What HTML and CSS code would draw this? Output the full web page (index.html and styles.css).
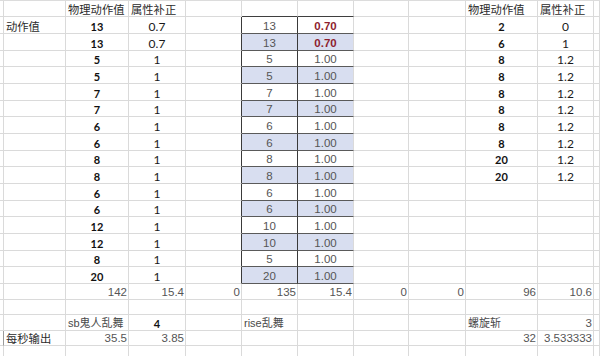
FILE: index.html
```html
<!DOCTYPE html>
<html lang="zh-CN">
<head>
<meta charset="utf-8">
<title>动作值</title>
<link rel="stylesheet" href="styles.css">
</head>
<body>
<div class="sheet">
  <div class="row h16">
    <div></div><div></div><div class="zh">物理动作值</div><div class="zh">属性补正</div><div></div><div class="tt"></div><div class="tt"></div><div></div><div></div><div class="zh">物理动作值</div><div class="zh">属性补正</div><div></div>
  </div>
  <div class="row h17">
    <div></div><div class="zh">动作值</div><div class="c bn">13</div><div class="c rn">0.7</div><div class="tl"></div><div class="c te">13</div><div class="c tf red">0.70</div><div></div><div></div><div class="c bn">2</div><div class="c rn">0</div><div></div>
  </div>
  <div class="row h17">
    <div></div><div></div><div class="c bn">13</div><div class="c rn">0.7</div><div class="tl"></div><div class="c te blue">13</div><div class="c tf blue red">0.70</div><div></div><div></div><div class="c bn">6</div><div class="c rn">1</div><div></div>
  </div>
  <div class="row h16">
    <div></div><div></div><div class="c bn">5</div><div class="c rn">1</div><div class="tl"></div><div class="c te">5</div><div class="c tf">1.00</div><div></div><div></div><div class="c bn">8</div><div class="c rn">1.2</div><div></div>
  </div>
  <div class="row h17">
    <div></div><div></div><div class="c bn">5</div><div class="c rn">1</div><div class="tl"></div><div class="c te blue">5</div><div class="c tf blue">1.00</div><div></div><div></div><div class="c bn">8</div><div class="c rn">1.2</div><div></div>
  </div>
  <div class="row h17">
    <div></div><div></div><div class="c bn">7</div><div class="c rn">1</div><div class="tl"></div><div class="c te">7</div><div class="c tf">1.00</div><div></div><div></div><div class="c bn">8</div><div class="c rn">1.2</div><div></div>
  </div>
  <div class="row h16">
    <div></div><div></div><div class="c bn">7</div><div class="c rn">1</div><div class="tl"></div><div class="c te blue">7</div><div class="c tf blue">1.00</div><div></div><div></div><div class="c bn">8</div><div class="c rn">1.2</div><div></div>
  </div>
  <div class="row h17">
    <div></div><div></div><div class="c bn">6</div><div class="c rn">1</div><div class="tl"></div><div class="c te">6</div><div class="c tf">1.00</div><div></div><div></div><div class="c bn">8</div><div class="c rn">1.2</div><div></div>
  </div>
  <div class="row h17">
    <div></div><div></div><div class="c bn">6</div><div class="c rn">1</div><div class="tl"></div><div class="c te blue">6</div><div class="c tf blue">1.00</div><div></div><div></div><div class="c bn">8</div><div class="c rn">1.2</div><div></div>
  </div>
  <div class="row h16">
    <div></div><div></div><div class="c bn">8</div><div class="c rn">1</div><div class="tl"></div><div class="c te">8</div><div class="c tf">1.00</div><div></div><div></div><div class="c bn">20</div><div class="c rn">1.2</div><div></div>
  </div>
  <div class="row h17">
    <div></div><div></div><div class="c bn">8</div><div class="c rn">1</div><div class="tl"></div><div class="c te blue">8</div><div class="c tf blue">1.00</div><div></div><div></div><div class="c bn">20</div><div class="c rn">1.2</div><div></div>
  </div>
  <div class="row h17">
    <div></div><div></div><div class="c bn">6</div><div class="c rn">1</div><div class="tl"></div><div class="c te">6</div><div class="c tf">1.00</div><div></div><div></div><div></div><div></div><div></div>
  </div>
  <div class="row h16">
    <div></div><div></div><div class="c bn">6</div><div class="c rn">1</div><div class="tl"></div><div class="c te blue">6</div><div class="c tf blue">1.00</div><div></div><div></div><div></div><div></div><div></div>
  </div>
  <div class="row h17">
    <div></div><div></div><div class="c bn">12</div><div class="c rn">1</div><div class="tl"></div><div class="c te">10</div><div class="c tf">1.00</div><div></div><div></div><div></div><div></div><div></div>
  </div>
  <div class="row h17">
    <div></div><div></div><div class="c bn">12</div><div class="c rn">1</div><div class="tl"></div><div class="c te blue">10</div><div class="c tf blue">1.00</div><div></div><div></div><div></div><div></div><div></div>
  </div>
  <div class="row h16">
    <div></div><div></div><div class="c bn">8</div><div class="c rn">1</div><div class="tl"></div><div class="c te">5</div><div class="c tf">1.00</div><div></div><div></div><div></div><div></div><div></div>
  </div>
  <div class="row h17">
    <div></div><div></div><div class="c bn">20</div><div class="c rn">1</div><div class="tl"></div><div class="c te blue">20</div><div class="c tf blue">1.00</div><div></div><div></div><div></div><div></div><div></div>
  </div>
  <div class="row h16">
    <div></div><div></div><div class="r">142</div><div class="r">15.4</div><div class="r">0</div><div class="r">135</div><div class="r">15.4</div><div class="r">0</div><div class="r">0</div><div class="r">96</div><div class="r">10.6</div><div></div>
  </div>
  <div class="row h15">
    <div></div><div></div><div></div><div></div><div></div><div></div><div></div><div></div><div></div><div></div><div></div><div></div>
  </div>
  <div class="row h16">
    <div></div><div></div><div class="zs">sb鬼人乱舞</div><div class="c bn">4</div><div></div><div class="zs">rise乱舞</div><div></div><div></div><div></div><div class="zs">螺旋斩</div><div class="r">3</div><div></div>
  </div>
  <div class="row h15">
    <div class="sel"></div><div class="zh">每秒输出</div><div class="r">35.5</div><div class="r">3.85</div><div></div><div></div><div></div><div></div><div></div><div class="r">32</div><div class="r">3.533333</div><div></div>
  </div>
  <div class="row hl">
    <div></div><div></div><div></div><div></div><div></div><div></div><div></div><div></div><div></div><div></div><div></div><div></div>
  </div>
</div>
</body>
</html>
```
FILE: styles.css
```css
html, body {
  margin: 0;
  padding: 0;
  background: #ffffff;
}

body {
  width: 600px;
  height: 356px;
  overflow: hidden;
}

.sheet {
  border-top: 1px solid #dcdcdc;
}

.row {
  display: grid;
  grid-template-columns: 4px 62px 63px 57px 56px 56px 56px 55px 57px 72px 56px 1fr;
}

.h17 { height: 17px; }
.h16 { height: 16px; }
.h15 { height: 15px; }
.hl { height: 12px; }

.row > div {
  box-sizing: border-box;
  border-right: 1px solid #dadada;
  border-bottom: 1px solid #dadada;
  display: flex;
  align-items: flex-end;
  padding: 0 1px 0 2px;
  white-space: nowrap;
  min-width: 0;
  font: 400 11.5px/13px "Liberation Sans", "Noto Sans CJK SC", sans-serif;
  color: #555555;
}

.row > .c { justify-content: center; padding: 0; }
.row > .r { justify-content: flex-end; }

.row > .bn {
  font: 700 11px/12px Lato, "Liberation Sans", sans-serif;
  color: #111111;
}

.row > .rn {
  font: 400 12px/12px Lato, "Liberation Sans", sans-serif;
  color: #1a1a1a;
}

.row > .zh {
  font: 400 11.3px/14px "Noto Sans CJK SC", sans-serif;
  color: #2b2b2b;
}

.row > .zs {
  font: 400 11px/14px "Liberation Sans", "Noto Sans CJK SC", sans-serif;
  color: #4a4a4a;
}

/* blue table */
.row > .tt { border-bottom-color: #3f3f3f; }
.row > .tl { border-right-color: #3a3a3a; }
.row > .te {
  border-right-color: #3a3a3a;
  border-bottom-color: #5a5a5a;
}
.row > .tf { border-bottom-color: #5a5a5a; }
.row > .blue { background: #d8def0; }
.row > .red {
  font-weight: 700;
  color: #8e1f2f;
}

.row > .sel { border-right-color: #9a9a9a; }
```
